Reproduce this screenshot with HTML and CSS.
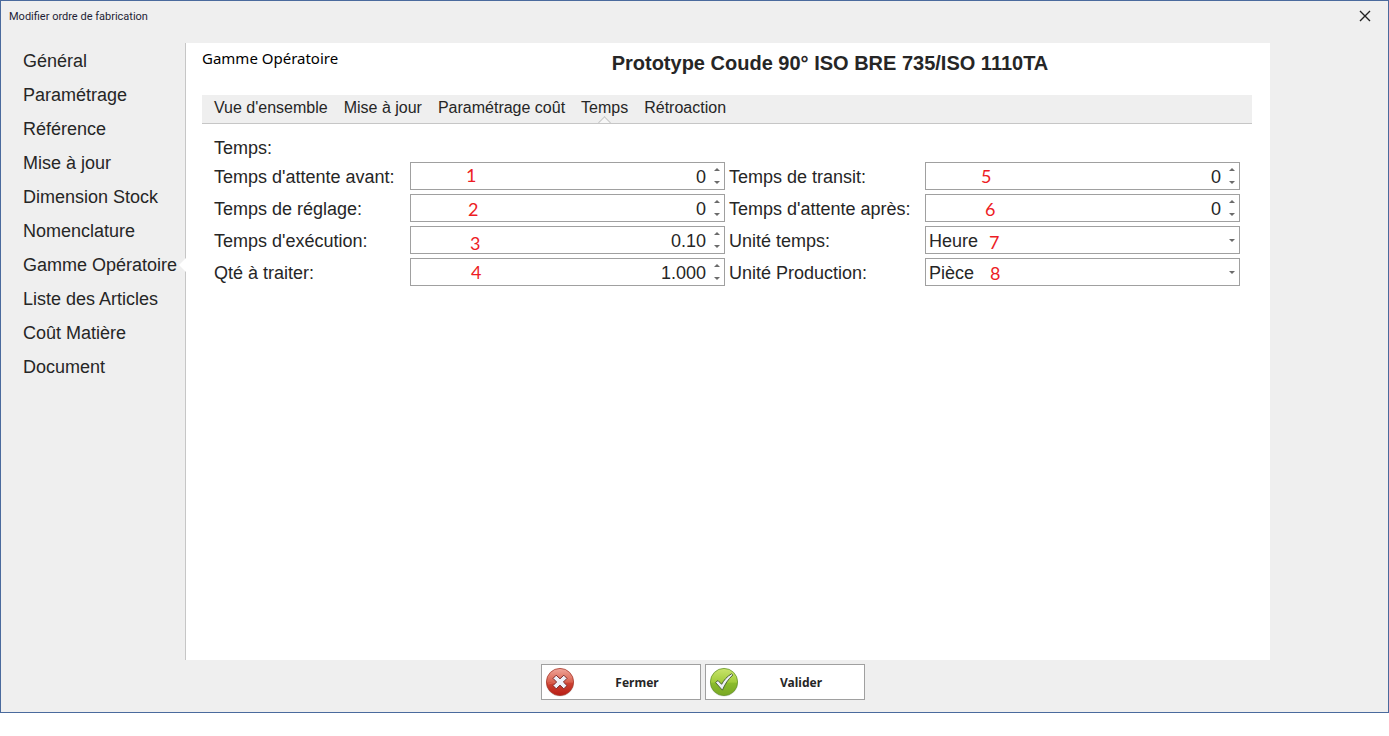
FILE: index.html
```html
<!DOCTYPE html>
<html lang="fr">
<head>
	<meta charset="UTF-8">
	<meta name="viewport" content="width=device-width, initial-scale=1.0">
	<title>Modifier ordre de fabrication</title>
	<link rel="stylesheet" href="styles.css">
</head>
<body>
	<div class="window">
		<header class="titlebar">
			<span class="titlebar-text">Modifier ordre de fabrication</span>
			<button class="close-button" type="button" aria-label="Fermer">
				<svg width="12" height="12" viewBox="0 0 12 12"><path d="M1 1l10 10M11 1L1 11" stroke="#222" stroke-width="1.4" fill="none"/></svg>
			</button>
		</header>

		<div class="content">
			<nav class="sidebar">
				<a href="#">Général</a>
				<a href="#">Paramétrage</a>
				<a href="#">Référence</a>
				<a href="#">Mise à jour</a>
				<a href="#">Dimension Stock</a>
				<a href="#">Nomenclature</a>
				<a href="#" class="active">Gamme Opératoire</a>
				<a href="#">Liste des Articles</a>
				<a href="#">Coût Matière</a>
				<a href="#">Document</a>
			</nav>

			<main class="panel">
				<div class="panel-header">
					<h2 class="section-title">Gamme Opératoire</h2>
					<h1 class="product-title">Prototype Coude 90° ISO BRE 735/ISO 1110TA</h1>
				</div>

				<nav class="tabs">
					<a href="#">Vue d'ensemble</a>
					<a href="#">Mise à jour</a>
					<a href="#">Paramétrage coût</a>
					<a href="#" class="active">Temps</a>
					<a href="#">Rétroaction</a>
				</nav>

				<form class="times" id="times">
					<div class="group-title">Temps:</div>
					<div class="columns">
						<div class="column">
							<div class="row">
								<label for="wait-before">Temps d'attente avant:</label>
								<div class="field">
									<input id="wait-before" type="text" inputmode="decimal" value="0">
									<div class="spin">
										<button type="button" class="up" aria-label="Plus"></button>
										<button type="button" class="down" aria-label="Moins"></button>
									</div>
									<span class="mark mark-1">1</span>
								</div>
							</div>
							<div class="row">
								<label for="setup">Temps de réglage:</label>
								<div class="field">
									<input id="setup" type="text" inputmode="decimal" value="0">
									<div class="spin">
										<button type="button" class="up" aria-label="Plus"></button>
										<button type="button" class="down" aria-label="Moins"></button>
									</div>
									<span class="mark mark-2">2</span>
								</div>
							</div>
							<div class="row">
								<label for="run">Temps d'exécution:</label>
								<div class="field">
									<input id="run" type="text" inputmode="decimal" value="0.10">
									<div class="spin">
										<button type="button" class="up" aria-label="Plus"></button>
										<button type="button" class="down" aria-label="Moins"></button>
									</div>
									<span class="mark mark-3">3</span>
								</div>
							</div>
							<div class="row">
								<label for="quantity">Qté à traiter:</label>
								<div class="field">
									<input id="quantity" type="text" inputmode="decimal" value="1.000">
									<div class="spin">
										<button type="button" class="up" aria-label="Plus"></button>
										<button type="button" class="down" aria-label="Moins"></button>
									</div>
									<span class="mark mark-4">4</span>
								</div>
							</div>
						</div>

						<div class="column">
							<div class="row">
								<label for="transit">Temps de transit:</label>
								<div class="field">
									<input id="transit" type="text" inputmode="decimal" value="0">
									<div class="spin">
										<button type="button" class="up" aria-label="Plus"></button>
										<button type="button" class="down" aria-label="Moins"></button>
									</div>
									<span class="mark mark-5">5</span>
								</div>
							</div>
							<div class="row">
								<label for="wait-after">Temps d'attente après:</label>
								<div class="field">
									<input id="wait-after" type="text" inputmode="decimal" value="0">
									<div class="spin">
										<button type="button" class="up" aria-label="Plus"></button>
										<button type="button" class="down" aria-label="Moins"></button>
									</div>
									<span class="mark mark-6">6</span>
								</div>
							</div>
							<div class="row">
								<label for="time-unit">Unité temps:</label>
								<div class="field dropdown">
									<select id="time-unit">
										<option>Heure</option>
									</select>
									<span class="mark mark-7">7</span>
								</div>
							</div>
							<div class="row">
								<label for="production-unit">Unité Production:</label>
								<div class="field dropdown">
									<select id="production-unit">
										<option>Pièce</option>
									</select>
									<span class="mark mark-8">8</span>
								</div>
							</div>
						</div>
					</div>
				</form>
			</main>
		</div>

		<footer class="actions">
			<button class="action-button" type="button">
				<svg width="30" height="30" viewBox="0 0 30 30">
					<defs>
						<linearGradient id="red" x1="0" y1="0" x2="0" y2="1">
							<stop offset="0" stop-color="#f0a79b"/>
							<stop offset=".5" stop-color="#d9614f"/>
							<stop offset=".55" stop-color="#cc4232"/>
							<stop offset="1" stop-color="#b81c14"/>
						</linearGradient>
					</defs>
					<ellipse cx="15" cy="16" rx="14" ry="13.6" fill="#000" opacity=".12"/>
					<circle cx="15" cy="15" r="13.6" fill="url(#red)" stroke="#a8392c" stroke-width=".8"/>
					<path d="M3 17C8 16 18 14 27 10" stroke="#e88577" stroke-width=".8" fill="none" opacity=".6"/>
					<path d="M11.2 8.2L15 11.800l3.800-3.600 3.200 3.200-3.600 3.600 3.600 3.600-3.200 3.200L15 18.200l-3.800 3.600-3.200-3.200 3.600-3.600L8 11.400z" fill="#eef0f8" stroke="#7c2a2a" stroke-width="1" stroke-linejoin="round"/>
				</svg>
				<span>Fermer</span>
			</button>
			<button class="action-button" type="submit" form="times">
				<svg width="30" height="30" viewBox="0 0 30 30">
					<defs>
						<linearGradient id="green" x1="0" y1="0" x2="0" y2="1">
							<stop offset="0" stop-color="#c9e46c"/>
							<stop offset=".5" stop-color="#a2cc3b"/>
							<stop offset=".55" stop-color="#8abb2c"/>
							<stop offset="1" stop-color="#79a824"/>
						</linearGradient>
					</defs>
					<ellipse cx="15" cy="16" rx="14" ry="13.6" fill="#000" opacity=".12"/>
					<circle cx="15" cy="15" r="13.6" fill="url(#green)" stroke="#67962a" stroke-width=".8"/>
					<path d="M6.500 15.500L9 13.500l3.600 3.800C15 13 18 9.500 22.500 6.800L23.800 8C19 12.500 16 17 13.400 23.200z" fill="#eef0f8" stroke="#4d6332" stroke-width="1" stroke-linejoin="round"/>
				</svg>
				<span>Valider</span>
			</button>
		</footer>
	</div>
</body>
</html>
```

FILE: styles.css
```css
*, *::before, *::after {
	box-sizing: border-box;
}

body {
	margin: 0;
	background-color: white;
	color: #262626;
	font-family: "Liberation Sans", Arial, sans-serif;
	font-size: 18px;
}

a {
	color: inherit;
	text-decoration: none;
}

button {
	padding: 0;
	border: none;
	background: none;
	color: inherit;
	cursor: pointer;
}

.window {
	display: flex;
	flex-direction: column;
	min-height: calc(100vh - 23px);
	border: 1px solid #4a6a9d;
	background-color: #efefef;
}

.titlebar {
	display: flex;
	justify-content: space-between;
	align-items: center;
	height: 30px;
	padding: 0 17px 0 8px;
}

.titlebar-text {
	color: #1e1e35;
	font-family: Roboto, sans-serif;
	font-size: 11px;
}

.close-button {
	display: flex;
}

.content {
	display: flex;
	flex: 1;
	padding: 12px 118px 0 0;
}

.sidebar {
	display: flex;
	flex-direction: column;
	width: 184px;
	padding-top: 1px;
}

.sidebar a {
	position: relative;
	padding-left: 22px;
	line-height: 34px;
	white-space: nowrap;
}

/* notch pointing at the open section */
.sidebar a.active::after {
	content: '';
	position: absolute;
	top: 10px;
	right: -1px;
	border: 7px solid transparent;
	border-left: none;
	border-right-color: white;
}

.panel {
	flex: 1;
	padding: 0 18px 0 16px;
	border-left: 1px solid #c6c6c6;
	background-color: white;
}

.panel-header {
	display: flex;
	height: 52px;
}

.section-title {
	width: 206px;
	margin: 0;
	color: black;
	font-family: "Noto Sans", sans-serif;
	font-size: 15px;
	font-weight: normal;
	line-height: 30px;
}

.product-title {
	flex: 1;
	margin: 0;
	font-size: 20px;
	line-height: 40px;
	text-align: center;
}

.tabs {
	display: flex;
	gap: 16px;
	height: 29px;
	padding-left: 12px;
	border-bottom: 1px solid #c6c6c6;
	background-color: #efefef;
	font-size: 16px;
	line-height: 26px;
}

.tabs a {
	position: relative;
}

.tabs a.active::after {
	content: '';
	position: absolute;
	bottom: -4px;
	left: 50%;
	width: 9px;
	height: 9px;
	margin-left: -5px;
	border: 1px solid #c6c6c6;
	border-width: 1px 0 0 1px;
	background: linear-gradient(135deg, #f7f7f7 50%, transparent 50%);
	transform: rotate(45deg);
}

.times {
	padding: 12px 12px 0;
}

.group-title {
	height: 26px;
	line-height: 24px;
}

.columns {
	display: flex;
	gap: 4px;
}

.column {
	display: flex;
	flex: 1;
	flex-direction: column;
	gap: 4px;
}

.row {
	display: flex;
}

.row label {
	width: 196px;
	line-height: 30px;
}

.field {
	display: flex;
	flex: 1;
	position: relative;
	height: 28px;
	border: 1px solid #a0a0a0;
	background-color: white;
}

/* labels keep a 30px line, the row stays 28px high */
.row {
	height: 28px;
}

.field input,
.field select {
	flex: 1;
	min-width: 0;
	padding: 2px 3px 0;
	border: none;
	outline: none;
	background: none;
	color: inherit;
	font: inherit;
}

.field input {
	text-align: right;
}

.field select {
	appearance: none;
}

.spin {
	display: flex;
	flex-direction: column;
	width: 15px;
}

.spin button {
	display: flex;
	flex: 1;
	justify-content: center;
	align-items: center;
}

.spin button::before,
.dropdown::after {
	content: '';
	border: 3px solid transparent;
}

.spin .up::before {
	border-top: none;
	border-bottom-color: #6b6b6b;
}

.spin .down::before,
.dropdown::after {
	border-bottom: none;
	border-top-color: #6b6b6b;
}

.dropdown::after {
	position: absolute;
	top: 12px;
	right: 4px;
	pointer-events: none;
}

/* red callout numbers over the fields */
.mark {
	position: absolute;
	color: #ed1c24;
	font-family: Lato, sans-serif;
	font-size: 18px;
	line-height: 22px;
	pointer-events: none;
}

.mark-1 { left: 55px; top: 1px; }
.mark-2 { left: 57px; top: 3px; }
.mark-3 { left: 59px; top: 5px; }
.mark-4 { left: 60px; top: 2px; }
.mark-5 { left: 55px; top: 2px; }
.mark-6 { left: 59px; top: 3px; }
.mark-7 { left: 63px; top: 4px; }
.mark-8 { left: 64px; top: 3px; }

.actions {
	display: flex;
	justify-content: center;
	gap: 4px;
	padding: 4px 0 12px 16px;
}

.action-button {
	display: flex;
	align-items: center;
	width: 160px;
	height: 36px;
	padding: 0 0 0 3px;
	border: 1px solid #a0a0a0;
	background-color: white;
	font-family: "Noto Sans", sans-serif;
	font-size: 12px;
	font-weight: bold;
}

.action-button span {
	flex: 1;
}
```
